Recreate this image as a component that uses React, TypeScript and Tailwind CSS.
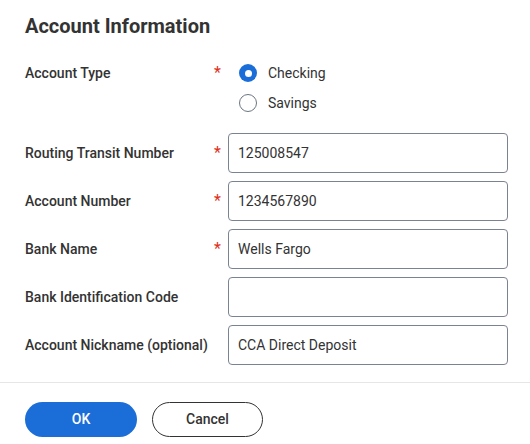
import React from "react";

const fields = [
  { label: "Routing Transit Number", value: "125008547", required: true },
  { label: "Account Number", value: "1234567890", required: true },
  { label: "Bank Name", value: "Wells Fargo", required: true },
  { label: "Bank Identification Code", value: "", required: false },
  { label: "Account Nickname (optional)", value: "CCA Direct Deposit", required: false },
];

function Radio({ checked, label }: { checked: boolean; label: string }) {
  return (
    <label className="h-[30px] pl-[11px] flex items-center gap-[11px] cursor-pointer">
      {checked ? (
        <span className="w-[18px] h-[18px] rounded-full bg-[#1b6ed8] flex items-center justify-center">
          <span className="w-[7px] h-[7px] rounded-full bg-white" />
        </span>
      ) : (
        <span className="w-[18px] h-[18px] rounded-full border border-[#6b7682] bg-white" />
      )}
      <span className="text-[14px] text-[#333]">{label}</span>
    </label>
  );
}

export default function App() {
  return (
    <div className="w-[530px] h-[444px] bg-white text-[#333] font-['Roboto',sans-serif] overflow-hidden">
      <div className="pl-[25px] pr-[22px] pt-[14px]">
        <h1 className="text-[20px] leading-[24px] font-bold">Account Information</h1>

        {/* Account type */}
        <div className="mt-[20px] flex items-start">
          <div className="w-[189px] shrink-0 h-[30px] flex items-center text-[14px] font-medium">Account Type</div>
          <div className="w-[14px] shrink-0 h-[30px] flex items-center text-[16px] text-[#de2f21]">*</div>
          <div className="flex flex-col">
            <Radio checked label="Checking" />
            <Radio checked={false} label="Savings" />
          </div>
        </div>

        <div className="mt-[15px] flex flex-col gap-[8px]">
          {fields.map((f) => (
            <div key={f.label} className="flex items-center h-[40px]">
              <div className="w-[189px] shrink-0 text-[14px] font-medium">{f.label}</div>
              <div className="w-[14px] shrink-0 text-[16px] text-[#de2f21]">{f.required ? "*" : ""}</div>
              <input
                defaultValue={f.value}
                className="w-[280px] shrink-0 h-[40px] border border-[#7a8490] rounded-[4px] px-[9px] text-[14px] text-[#333] outline-none"
              />
            </div>
          ))}
        </div>
      </div>

      <div className="mt-[17px] border-t border-[#e6e6e6]" />

      <div className="px-[25px] pt-[19px] flex gap-[15px]">
        <button className="w-[112px] h-[35px] rounded-full bg-[#1b6ed8] text-white text-[14px] font-medium">
          OK
        </button>
        <button className="w-[111px] h-[35px] rounded-full border border-[#333] bg-white text-[#333] text-[14px] font-medium">
          Cancel
        </button>
      </div>
    </div>
  );
}
